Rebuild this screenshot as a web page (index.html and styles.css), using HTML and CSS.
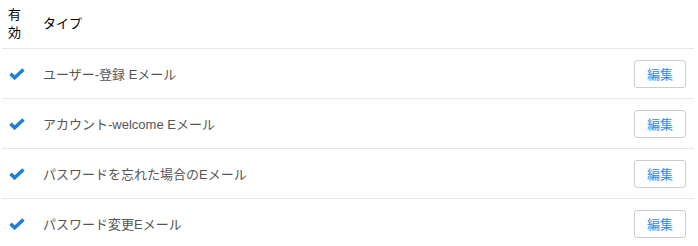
FILE: index.html
```html
<!DOCTYPE html>
<html lang="ja">
<head>
    <meta charset="UTF-8">
    <title>メールテンプレート</title>
    <link rel="stylesheet" href="styles.css">
</head>
<body>
    <table class="mailTable">
        <thead>
            <tr>
                <th class="colActive">有効</th>
                <th class="colType">タイプ</th>
                <th class="colAction"></th>
            </tr>
        </thead>
        <tbody>
            <tr>
                <td class="colActive"><svg class="check" viewBox="0 0 16 12" width="16" height="12"><path d="M1.5 5.8 L5.6 9.8 L14.5 1.5"/></svg></td>
                <td class="colType">ユーザー-登録 Eメール</td>
                <td class="colAction"><button class="editButton">編集</button></td>
            </tr>
            <tr>
                <td class="colActive"><svg class="check" viewBox="0 0 16 12" width="16" height="12"><path d="M1.5 5.8 L5.6 9.8 L14.5 1.5"/></svg></td>
                <td class="colType">アカウント-welcome Eメール</td>
                <td class="colAction"><button class="editButton">編集</button></td>
            </tr>
            <tr>
                <td class="colActive"><svg class="check" viewBox="0 0 16 12" width="16" height="12"><path d="M1.5 5.8 L5.6 9.8 L14.5 1.5"/></svg></td>
                <td class="colType">パスワードを忘れた場合のEメール</td>
                <td class="colAction"><button class="editButton">編集</button></td>
            </tr>
            <tr>
                <td class="colActive"><svg class="check" viewBox="0 0 16 12" width="16" height="12"><path d="M1.5 5.8 L5.6 9.8 L14.5 1.5"/></svg></td>
                <td class="colType">パスワード変更Eメール</td>
                <td class="colAction"><button class="editButton">編集</button></td>
            </tr>
        </tbody>
    </table>
</body>
</html>
```
FILE: styles.css
```css
body {
    font-family: "Liberation Sans", "Noto Sans CJK JP", sans-serif;
    font-size: 13px;
    margin: 0;
    padding: 0 4px 0 2px;
    background-color: #fff;
}
.mailTable {
    width: 692px;
    border-collapse: collapse;
}
th, td {
    border-bottom: 1px solid #e8e8e8;
    text-align: left;
    vertical-align: middle;
    padding: 0;
}
th {
    height: 48px;
    font-weight: normal;
    color: #000;
    line-height: 18px;
}
td {
    height: 49px;
    color: #555;
}
.colActive {
    width: 16px;
    padding: 0 6px;
}
.colType {
    padding-left: 12px;
}
.colAction {
    text-align: right;
    padding-right: 8px;
}
.check {
    display: block;
    margin: 1px 0 0 1px;
}
.check path {
    fill: none;
    stroke: #1f7fd6;
    stroke-width: 3.5;
}
.editButton {
    width: 52px;
    height: 28px;
    background-color: #fff;
    border: 1px solid #ccc;
    border-radius: 3px;
    color: #2d8cf0;
    font-family: inherit;
    font-size: 13px;
    padding: 0;
    cursor: pointer;
}
tbody tr:last-child td {
    border-bottom: none;
}
```
